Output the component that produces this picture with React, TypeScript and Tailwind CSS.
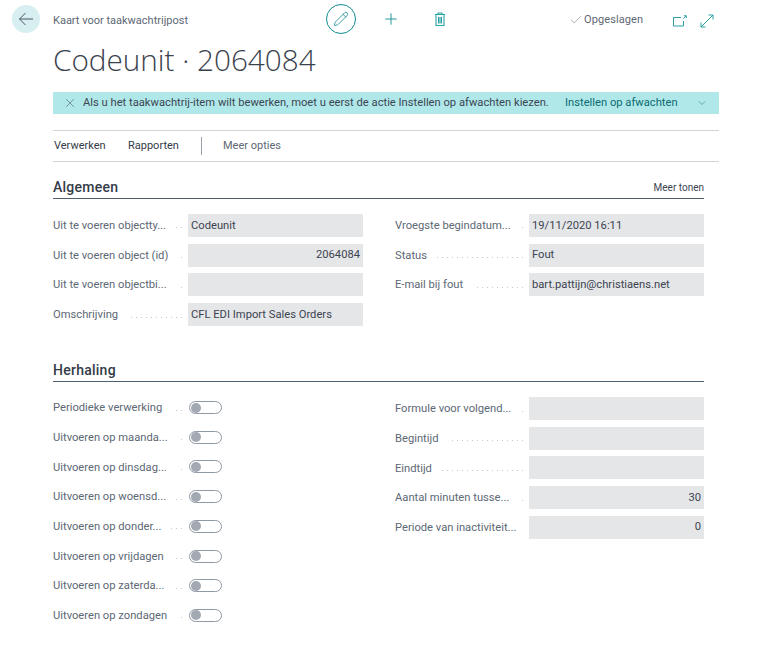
import { Check, ChevronDown, Pencil, Plus, X } from "lucide-react";

const FONT = "font-['Roboto','Open_Sans',sans-serif]";

interface FieldProps {
  label: string;
  value?: string;
  right?: boolean;
  inset?: boolean;
}

function Label({ label, inset }: { label: string; inset?: boolean }) {
  return (
    <div className={`flex w-[135px] shrink-0 items-center overflow-hidden pr-[6px] pt-[2px] ${inset ? "pl-px" : ""}`}>
      <span className="shrink-0 whitespace-nowrap text-[11.200px] text-[#5d6875]">{label}</span>
      <span className="ml-2.5 mt-[3px] h-px min-w-0 flex-1 bg-[repeating-linear-gradient(270deg,#c6cacf_0,#c6cacf_1px,transparent_1px,transparent_5px)]" />
    </div>
  );
}

function Field({ label, value, right, inset }: FieldProps) {
  return (
    <div className="flex h-[23px] items-center">
      <Label label={label} inset={inset} />
      <div
        className={`flex h-[23px] w-[175px] items-center bg-[#e5e6e8] px-[3px] pt-px text-[11.200px] text-[#3c4450] ${
          right ? "justify-end" : ""
        }`}
      >
        {value}
      </div>
    </div>
  );
}

function Toggle({ label }: { label: string }) {
  return (
    <div className="flex h-[13px] items-center">
      <Label label={label} />
      <div className="ml-px flex h-[13px] w-[33px] items-center rounded-full border border-[#8f98a3] bg-white pl-[1px]">
        <span className="h-[10px] w-[10px] rounded-full bg-[#a3a9b3]" />
      </div>
    </div>
  );
}

function Section({ title, more }: { title: string; more?: boolean }) {
  return (
    <div className="flex h-[20px] items-center justify-between border-b border-[#4e5f70] pb-[3px]">
      <span className="text-[14px] font-medium tracking-[0.25px] text-[#333b47]">{title}</span>
      {more && <span className="text-[10px] text-[#3c4450]">Meer tonen</span>}
    </div>
  );
}

export default function App() {
  return (
    <div className={`h-[655px] w-[770px] overflow-hidden bg-white ${FONT}`}>
      <header className="flex h-[38px] items-start pt-[5px]">
        <button className="ml-3 flex h-7 w-7 items-center justify-center rounded-full bg-[#d8eff1]">
          <svg width="16" height="14" viewBox="0 0 16 14" fill="none" stroke="#4a5663" strokeWidth="1">
            <path d="M15 7H1.500M7.500 1 1.500 7l6 6" />
          </svg>
        </button>
        <span className="ml-[13px] mt-[9px] w-[273px] text-[11px] leading-[14px] text-[#5d6875]">
          Kaart voor taakwachtrijpost
        </span>
        <button className="-mt-[1px] flex h-[30px] w-[30px] items-center justify-center rounded-full border border-[#108a8f]">
          <Pencil size={16} strokeWidth={1.2} color="#108a8f" />
        </button>
        <Plus size={18} strokeWidth={1.2} color="#108a8f" className="ml-[26px] mt-[5px]" />
        <svg width="12" height="14" viewBox="0 0 12 14" fill="none" stroke="#2aa0a4" strokeWidth="1.1" className="ml-[34px] mt-[7px]">
          <path d="M1 2.500h10M4 2.500V1h4v1.500M2 2.500h8v11H2zM4.500 5v6.500M6 5v6.500M7.500 5v6.500" />
        </svg>
        <Check size={14} strokeWidth={0.9} color="#5d6875" className="ml-[123px] mt-[8px]" />
        <span className="ml-[1px] mt-[8px] w-[60px] whitespace-nowrap text-[11px] leading-[14px] tracking-[0.1px] text-[#5d6875]">
          Opgeslagen
        </span>
        <svg width="15" height="12" viewBox="0 0 15 12" fill="none" stroke="#2aa0a4" strokeWidth="1" className="ml-[29px] mt-[10px]">
          <path d="M8 2.500H.5v8.500h10V6M10.500 3.500 13 1M11 .7h2.300V3" />
        </svg>
        <svg width="14" height="14" viewBox="0 0 14 14" fill="none" stroke="#2aa0a4" strokeWidth="1" className="ml-[12px] mt-[9px]">
          <path d="M1 13 13 1M8.500 1H13v4.500M1 8.500V13h4.500" />
        </svg>
      </header>

      <main className="ml-[53px] w-[666px]">
        <h1 className="mt-[5px] h-[33px] font-['Open_Sans',sans-serif] text-[29.700px] font-light leading-[33px] text-[#3a424d]">
          Codeunit · 2064084
        </h1>

        <div className="mt-[16px] flex h-[22px] items-center bg-[#b0e8ea] text-[11.200px] text-[#3c4652]">
          <X size={14} strokeWidth={1} color="#4a5663" className="ml-[10px] shrink-0" />
          <span className="ml-[6px] w-[482px] shrink-0 whitespace-nowrap">
            Als u het taakwachtrij-item wilt bewerken, moet u eerst de actie Instellen op afwachten kiezen.
          </span>
          <span className="w-[131px] shrink-0 whitespace-nowrap text-[#0c6a70]">Instellen op afwachten</span>
          <ChevronDown size={12} strokeWidth={1} color="#0c6a70" />
        </div>

        <nav className="mt-4 flex h-[32px] items-center border-y border-[#d2d3d8] text-[11px] text-[#333b47]">
          <span className="ml-[1px] w-[74px]">Verwerken</span>
          <span className="w-[73px]">Rapporten</span>
          <span className="h-[18px] border-l border-[#9aa0a8]" />
          <span className="ml-[21px] text-[#5d6875]">Meer opties</span>
        </nav>

        <section className="mt-[17px] w-[651px]">
          <Section title="Algemeen" more />
          <div className="mt-[15px] flex justify-between">
            <div className="flex flex-col gap-[6.700px]">
              <Field label="Uit te voeren objectty..." value="Codeunit" />
              <Field label="Uit te voeren object (id)" value="2064084" right />
              <Field label="Uit te voeren objectbi..." />
              <Field label="Omschrijving" value="CFL EDI Import Sales Orders" />
            </div>
            <div className="flex flex-col gap-[6.700px]">
              <Field inset label="Vroegste begindatum..." value="19/11/2020 16:11" />
              <Field inset label="Status" value="Fout" />
              <Field inset label="E-mail bij fout" value="bart.pattijn@christiaens.net" />
            </div>
          </div>
        </section>

        <section className="mt-[36px] w-[651px]">
          <Section title="Herhaling" />
          <div className="mt-[15px] flex justify-between">
            <div className="flex flex-col gap-[16.700px] pt-[4px]">
              <Toggle label="Periodieke verwerking" />
              <Toggle label="Uitvoeren op maanda..." />
              <Toggle label="Uitvoeren op dinsdag..." />
              <Toggle label="Uitvoeren op woensd..." />
              <Toggle label="Uitvoeren op donder..." />
              <Toggle label="Uitvoeren op vrijdagen" />
              <Toggle label="Uitvoeren op zaterda..." />
              <Toggle label="Uitvoeren op zondagen" />
            </div>
            <div className="flex flex-col gap-[6.700px]">
              <Field inset label="Formule voor volgend..." />
              <Field inset label="Begintijd" />
              <Field inset label="Eindtijd" />
              <Field inset label="Aantal minuten tusse..." value="30" right />
              <Field inset label="Periode van inactiviteit..." value="0" right />
            </div>
          </div>
        </section>
      </main>
    </div>
  );
}
